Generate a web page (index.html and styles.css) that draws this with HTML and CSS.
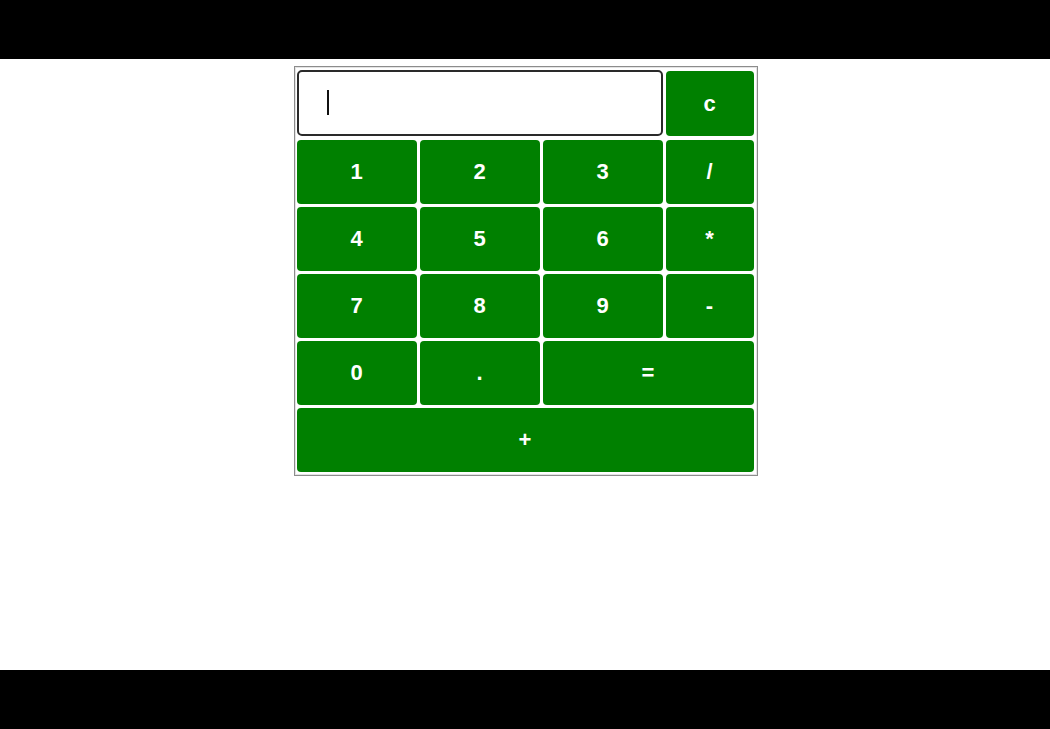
FILE: index.html
```html
<!DOCTYPE html>
<html lang="en">
<head>
<meta charset="utf-8">
<title>Calculator</title>
<link rel="stylesheet" href="styles.css">
</head>
<body>
<div class="bar"></div>
<main class="page">
  <form class="calc">
    <div class="display-wrap">
      <input class="display" type="text" autofocus>
      <span class="caret" aria-hidden="true"></span>
    </div>
    <button type="button" class="key key-c">c</button>
    <button type="button" class="key">1</button>
    <button type="button" class="key">2</button>
    <button type="button" class="key">3</button>
    <button type="button" class="key">/</button>
    <button type="button" class="key">4</button>
    <button type="button" class="key">5</button>
    <button type="button" class="key">6</button>
    <button type="button" class="key">*</button>
    <button type="button" class="key">7</button>
    <button type="button" class="key">8</button>
    <button type="button" class="key">9</button>
    <button type="button" class="key">-</button>
    <button type="button" class="key">0</button>
    <button type="button" class="key">.</button>
    <button type="button" class="key key-eq">=</button>
    <button type="button" class="key key-plus">+</button>
  </form>
</main>
<div class="bar"></div>
</body>
</html>
```

FILE: styles.css
```css
html, body {
  margin: 0;
  padding: 0;
  background: #000;
  font-family: "Liberation Sans", Arial, sans-serif;
}

.bar {
  height: 59px;
  background: #000;
}

.page {
  height: 611px;
  background: #fff;
  padding: 7px 0 0 1px;
  box-sizing: border-box;
  display: flex;
  justify-content: center;
  align-items: flex-start;
}

.calc {
  display: grid;
  grid-template-columns: 120px 120px 120px 88px;
  grid-template-rows: 67px repeat(5, 64px);
  gap: 3px;
  padding: 3px 3px 3px 2px;
  border: 1px solid #8c8c8c;
  box-shadow: inset 0 0 0 1px #e4e4e4;
  background: #fff;
}

.display-wrap {
  grid-column: 1 / span 3;
  position: relative;
  height: 66px;
}

.display {
  width: 100%;
  height: 66px;
  box-sizing: border-box;
  margin: 0;
  border: 2px solid #2a2a2a;
  border-radius: 5px;
  padding: 0 0 0 28px;
  font-family: "Liberation Sans", Arial, sans-serif;
  font-size: 22px;
  color: #000;
  background: #fff;
  outline: none;
  caret-color: #000;
}

.caret {
  position: absolute;
  left: 30px;
  top: 20px;
  width: 2px;
  height: 25px;
  background: #111;
  pointer-events: none;
}

.key {
  margin: 0;
  border: none;
  border-radius: 4px;
  background: #008000;
  color: #fff;
  font-family: "Liberation Sans", Arial, sans-serif;
  font-weight: bold;
  font-size: 22px;
  padding: 0;
  cursor: pointer;
}

.key-c {
  margin-top: 1px;
  height: 65px;
}

.key-eq {
  grid-column: 3 / span 2;
}

.key-plus {
  grid-column: 1 / span 4;
}
```
